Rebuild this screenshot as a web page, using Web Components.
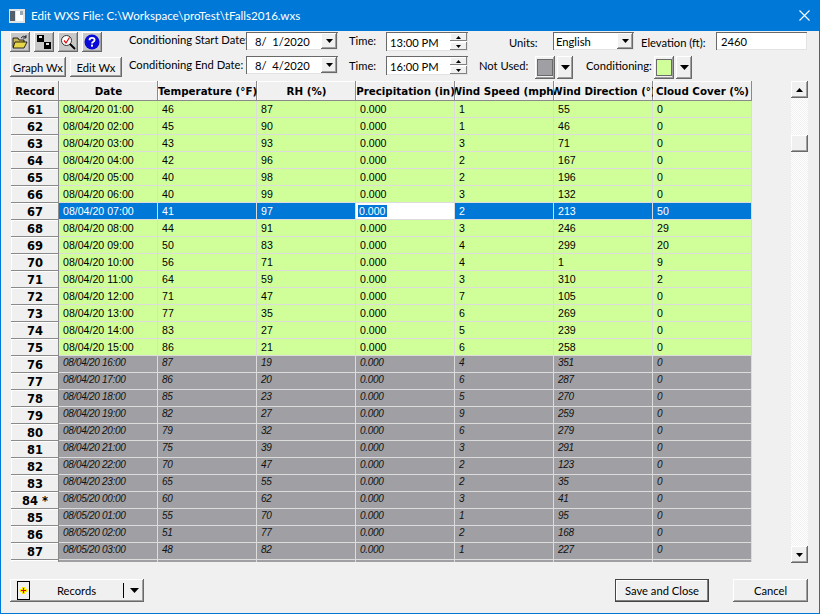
<!DOCTYPE html>
<html>
<head>
<meta charset="utf-8">
<title>Edit WXS File</title>
<style>
    html, body { margin: 0; padding: 0; background: #f0f0f0; }
</style>
</head>
<body>
<wxs-dialog heading="Edit WXS File: C:\Workspace\proTest\tFalls2016.wxs">
    <wxs-toolbar></wxs-toolbar>
    <wxs-table></wxs-table>
    <wxs-footer></wxs-footer>
</wxs-dialog>

<script>
/* Edit WXS dialog, drawn as old Win32 controls. */

const UI_FONT = 'Lato, Roboto, sans-serif';
const RAISED = 'inset -1px -1px #696969, inset 1px 1px #fff, inset -2px -2px #a0a0a0';
const SUNKEN = 'inset 1px 1px #696969, inset -1px -1px #e3e3e3';

const ARROW_DOWN = '<svg width="7" height="4" viewBox="0 0 7 4"><path d="M0,0 H7 L3.5,4 z" fill="#000"/></svg>';
const ARROW_UP = '<svg width="7" height="4" viewBox="0 0 7 4"><path d="M0,4 H7 L3.5,0 z" fill="#000"/></svg>';
const ARROW_WIDE = '<svg width="9" height="5" viewBox="0 0 9 5"><path d="M0,0 H9 L4.5,5 z" fill="#000"/></svg>';

const ROWS = [
    [61, '08/04/20 01:00', 46, 87, 1, 55, 0],
    [62, '08/04/20 02:00', 45, 90, 1, 46, 0],
    [63, '08/04/20 03:00', 43, 93, 3, 71, 0],
    [64, '08/04/20 04:00', 42, 96, 2, 167, 0],
    [65, '08/04/20 05:00', 40, 98, 2, 196, 0],
    [66, '08/04/20 06:00', 40, 99, 3, 132, 0],
    [67, '08/04/20 07:00', 41, 97, 2, 213, 50],
    [68, '08/04/20 08:00', 44, 91, 3, 246, 29],
    [69, '08/04/20 09:00', 50, 83, 4, 299, 20],
    [70, '08/04/20 10:00', 56, 71, 4, 1, 9],
    [71, '08/04/20 11:00', 64, 59, 3, 310, 2],
    [72, '08/04/20 12:00', 71, 47, 7, 105, 0],
    [73, '08/04/20 13:00', 77, 35, 6, 269, 0],
    [74, '08/04/20 14:00', 83, 27, 5, 239, 0],
    [75, '08/04/20 15:00', 86, 21, 6, 258, 0],
    [76, '08/04/20 16:00', 87, 19, 4, 351, 0],
    [77, '08/04/20 17:00', 86, 20, 6, 287, 0],
    [78, '08/04/20 18:00', 85, 23, 5, 270, 0],
    [79, '08/04/20 19:00', 82, 27, 9, 259, 0],
    [80, '08/04/20 20:00', 79, 32, 6, 279, 0],
    [81, '08/04/20 21:00', 75, 39, 3, 291, 0],
    [82, '08/04/20 22:00', 70, 47, 2, 123, 0],
    [83, '08/04/20 23:00', 65, 55, 2, 35, 0],
    ['84 *', '08/05/20 00:00', 60, 62, 3, 41, 0],
    [85, '08/05/20 01:00', 55, 70, 1, 95, 0],
    [86, '08/05/20 02:00', 51, 77, 2, 168, 0],
    [87, '08/05/20 03:00', 48, 82, 1, 227, 0],
    [88, '', '', '', '', '', ''],
];

const HEADERS = ['Date', 'Temperature (°F)', 'RH (%)', 'Precipitation (in)', 'Wind Speed (mph)', 'Wind Direction (°)', 'Cloud Cover (%)'];

const define = (name, render) => {
    customElements.define(name, class extends HTMLElement {
        constructor() {
            super();
            this.attachShadow({ mode: 'open' });
        }
        connectedCallback() {
            this.shadowRoot.innerHTML = render(this);
        }
    });
};

define('wxs-dialog', (el) => `
    <style>
        :host {
            display: flex;
            flex-direction: column;
            box-sizing: border-box;
            width: 820px;
            height: 614px;
            background: #f0f0f0;
            border: 1px solid #0078d7;
            border-top: 0;
            overflow: hidden;
        }
        .bar {
            display: flex;
            align-items: center;
            flex: none;
            height: 31px;
            margin: 0 -1px;
            padding-left: 9px;
            background: #0078d7;
            color: #fff;
            font: 11.6px ${UI_FONT};
        }
        .bar span { flex: 1; margin-left: 6px; }
        .close { margin-right: 10px; }
        svg { display: block; }
    </style>
    <div class="bar">
        <svg width="16" height="14" viewBox="0 0 16 14">
            <rect x="0" y="0" width="16" height="14" fill="#dfe3e6"/>
            <rect x="1" y="2" width="5" height="10" fill="#54606c"/>
            <rect x="7" y="2" width="7" height="10" fill="#fff"/>
            <rect x="11" y="2" width="3" height="4" fill="#9aa6b2"/>
        </svg>
        <span>${el.getAttribute('heading')}</span>
        <svg class="close" width="11" height="11" viewBox="0 0 11 11">
            <path d="M0.5,0.5 L10.5,10.5 M10.5,0.5 L0.5,10.5" stroke="#fff" stroke-width="1.1" fill="none"/>
        </svg>
    </div>
    <slot></slot>
`);

define('wxs-button', (el) => `
    <style>
        :host {
            display: flex;
            align-items: center;
            justify-content: center;
            box-sizing: border-box;
            flex: none;
            width: ${el.getAttribute('w')}px;
            height: ${el.getAttribute('h') || 19}px;
            background: ${el.hasAttribute('icon') ? '#c8c8c8' : '#f0f0f0'};
            box-shadow: ${el.hasAttribute('default') ? 'inset 0 0 0 1px #444, inset -2px -2px #808080, inset 2px 2px #fff' : RAISED};
            font: 11.2px ${UI_FONT};
            color: #000;
        }
    </style>
    <slot></slot>
`);

define('wxs-label', (el) => `
    <style>
        :host {
            display: block;
            flex: none;
            box-sizing: border-box;
            width: ${el.getAttribute('w')}px;
            margin-top: ${el.getAttribute('dy') || 0}px;
            font: 11.2px/16px ${UI_FONT};
            color: #000;
            white-space: nowrap;
        }
    </style>
    <slot></slot>
`);

define('wxs-combo', (el) => `
    <style>
        :host {
            display: flex;
            flex: none;
            box-sizing: border-box;
            width: ${el.getAttribute('w')}px;
            height: ${el.getAttribute('h') || 18}px;
            background: #fff;
            box-shadow: ${SUNKEN};
            font: 11.2px ${UI_FONT};
            color: #000;
        }
        .val { flex: 1; padding: 1px 0 0 ${el.getAttribute('pad') || 9}px; white-space: pre; line-height: 17px; }
        .btn {
            display: flex;
            align-items: center;
            justify-content: center;
            width: 16px;
            margin: 1px 1px 1px 0;
            background: #f0f0f0;
            box-shadow: ${RAISED};
        }
    </style>
    <div class="val"><slot></slot></div>
    ${el.hasAttribute('plain') ? '' : `<div class="btn">${ARROW_DOWN}</div>`}
`);

define('wxs-spin', (el) => `
    <style>
        :host {
            display: flex;
            flex: none;
            box-sizing: border-box;
            width: ${el.getAttribute('w')}px;
            height: 19px;
            background: #fff;
            box-shadow: ${SUNKEN};
            font: 11.2px ${UI_FONT};
            color: #000;
        }
        .val { flex: 1; padding: 2px 0 0 4px; line-height: 17px; }
        .btns { display: flex; flex-direction: column; gap: 1px; width: 17px; margin: 1px; }
        .btns div {
            flex: 1;
            display: flex;
            align-items: center;
            justify-content: center;
            background: #f0f0f0;
            box-shadow: inset -1px -1px #808080, inset 1px 1px #fff;
        }
        svg { width: 5px; height: 3px; }
    </style>
    <div class="val"><slot></slot></div>
    <div class="btns"><div>${ARROW_UP}</div><div>${ARROW_DOWN}</div></div>
`);

define('wxs-swatch', (el) => `
    <style>
        :host {
            display: flex;
            gap: 2px;
            flex: none;
            width: 38px;
            height: 23px;
        }
        .frame, .arrow {
            box-sizing: border-box;
            display: flex;
            align-items: center;
            justify-content: center;
            height: 23px;
            background: #f0f0f0;
            box-shadow: ${RAISED};
        }
        .frame { width: 20px; }
        .arrow { width: 16px; }
        .chip {
            width: 14px;
            height: 15px;
            background: ${el.getAttribute('color')};
            box-shadow: 0 0 0 1px #696969;
        }
    </style>
    <div class="frame"><div class="chip"></div></div>
    <div class="arrow">${ARROW_WIDE}</div>
`);

define('wxs-toolbar', () => `
    <style>
        :host { display: block; flex: none; height: 50px; }
        .row { display: flex; position: relative; }
        .r1 { padding: 1px 0 0 9px; height: 24px; }
        .r2 { padding: 0 0 0 9px; height: 25px; }
        .icons { display: flex; gap: 4px; width: 119px; flex: none; }
        .r2 .icons { padding-top: 1px; }
        svg { display: block; }
    </style>
    <div class="row r1">
        <div class="icons">
            <wxs-button icon w="20" h="20">
                <svg width="16" height="14" viewBox="0 0 16 14">
                    <path d="M1,3 H6 L7,5 H12 V12 H1 z" fill="#c9b458" stroke="#000" stroke-width="0.8"/>
                    <path d="M3,7 H15 L12,13 H1 z" fill="#e8d64a" stroke="#000" stroke-width="0.8"/>
                    <path d="M9,3 Q11,0 14,2 M14,0 V3 H11" fill="none" stroke="#000" stroke-width="0.8"/>
                </svg>
            </wxs-button>
            <wxs-button icon w="20" h="20">
                <svg width="14" height="14" viewBox="0 0 14 14">
                    <rect x="0" y="0" width="7" height="7" fill="#000"/>
                    <rect x="7" y="7" width="7" height="7" fill="#000"/>
                    <rect x="2" y="1" width="3" height="2" fill="#ddd"/>
                    <rect x="9" y="8" width="3" height="2" fill="#ddd"/>
                </svg>
            </wxs-button>
            <wxs-button icon w="20" h="20">
                <svg width="16" height="16" viewBox="0 0 16 16">
                    <circle cx="6.5" cy="6.5" r="5" fill="#fff" stroke="#333" stroke-width="1"/>
                    <path d="M4,6.5 L6,9 L9.5,3.5" fill="none" stroke="#e01010" stroke-width="1.3"/>
                    <path d="M10,10 L15,15" stroke="#000" stroke-width="2"/>
                </svg>
            </wxs-button>
            <wxs-button icon w="20" h="20">
                <svg width="16" height="16" viewBox="0 0 16 16">
                    <circle cx="8" cy="8" r="7.5" fill="#0a0ad8"/>
                    <path d="M5.5,6.2 Q5.5,3.8 8,3.8 Q10.6,3.8 10.6,6 Q10.6,7.2 9,8 Q8,8.6 8,9.6" fill="none" stroke="#fff" stroke-width="1.8"/>
                    <rect x="7" y="10.6" width="2" height="2" fill="#fff"/>
                </svg>
            </wxs-button>
        </div>
        <wxs-label w="117">Conditioning Start Date:</wxs-label>
        <wxs-combo w="92">8/  1/2020</wxs-combo>
        <wxs-label w="37" style="margin-left:11px" dy="1">Time:</wxs-label>
        <wxs-spin w="82">13:00 PM</wxs-spin>
        <wxs-label w="44" style="margin-left:41px" dy="3">Units:</wxs-label>
        <wxs-combo w="81" pad="3">English</wxs-combo>
        <wxs-label w="75" style="margin-left:7px" dy="3">Elevation (ft):</wxs-label>
        <wxs-combo plain w="91" pad="5">2460</wxs-combo>
    </div>
    <div class="row r2">
        <div class="icons">
            <wxs-button w="56" h="20">Graph Wx</wxs-button>
            <wxs-button w="52" h="20">Edit Wx</wxs-button>
        </div>
        <wxs-label w="117" dy="1">Conditioning End Date:</wxs-label>
        <wxs-combo w="92">8/  4/2020</wxs-combo>
        <wxs-label w="37" style="margin-left:11px" dy="2">Time:</wxs-label>
        <wxs-spin w="82">16:00 PM</wxs-spin>
        <wxs-label w="56" style="margin-left:11px" dy="2">Not Used:</wxs-label>
        <wxs-swatch color="#a0a0a4"></wxs-swatch>
        <wxs-label w="68" style="margin-left:13px" dy="2">Conditioning:</wxs-label>
        <wxs-swatch color="#d0ff99"></wxs-swatch>
    </div>
`);

const cellRow = (row) => {
    const [rec, date, temp, rh, speed, dir, cloud] = row;
    const n = parseInt(rec, 10);
    const kind = n === 67 ? 'sel' : n >= 76 ? 'off' : 'on';
    const precip = n === 67
        ? '<div class="c edit"><span>0.000</span></div>'
        : `<div class="c">${date ? '0.000' : ''}</div>`;
    return `<div class="rec">${date ? rec : ''}</div><div class="line ${kind}">
        <div class="c">${date}</div><div class="c">${temp}</div><div class="c">${rh}</div>
        ${precip}<div class="c">${speed}</div><div class="c">${dir}</div><div class="c">${cloud}</div>
    </div>`;
};

define('wxs-table', () => `
    <style>
        :host {
            display: flex;
            flex: none;
            height: 483px;
            margin-left: 10px;
            margin-right: 11px;
            justify-content: space-between;
        }
        .sheet {
            display: grid;
            grid-template-columns: 48px 1fr;
            grid-auto-rows: 17px;
            width: 742px;
            height: 481px;
            overflow: hidden;
            align-content: start;
            grid-template-rows: 20px;
        }
        .rec, .h {
            box-sizing: border-box;
            display: flex;
            align-items: center;
            justify-content: center;
            background: #f0f0f0;
            box-shadow: inset -1px -1px #8a8a8a, inset 1px 1px #fff;
            font: bold 10.3px "DejaVu Sans", sans-serif;
            color: #000;
            white-space: nowrap;
            overflow: hidden;
        }
        .rec { font-size: 11.5px; }
        .corner { font-size: 10px; }
        .heads, .line { display: grid; grid-template-columns: repeat(7, 99px); }
        .c {
            box-sizing: border-box;
            height: 17px;
            padding: 1px 0 0 4px;
            border-right: 1px solid #dcdcdc;
            border-bottom: 1px solid #dcdcdc;
            font: 10.6px/14px "Liberation Sans", sans-serif;
            white-space: nowrap;
            overflow: hidden;
        }
        .on .c { background: #d0ff99; color: #000; }
        .off .c { background: #a0a0a4; color: #111; font: italic 10px/12px "Liberation Sans", sans-serif; letter-spacing: -0.3px; }
        .sel .c { background: #0078d7; color: #fff; }
        .sel .c.edit { background: #fff; padding: 1px 0 0 2px; }
        .edit span { background: #0078d7; color: #fff; padding: 0 1px; }
        wxs-scroll { flex: none; }
    </style>
    <div class="sheet">
        <div class="h corner">Record</div>
        <div class="heads">${HEADERS.map((h) => `<div class="h">${h}</div>`).join('')}</div>
        ${ROWS.map(cellRow).join('')}
    </div>
    <wxs-scroll></wxs-scroll>
`);

define('wxs-scroll', () => `
    <style>
        :host {
            display: flex;
            flex-direction: column;
            box-sizing: border-box;
            width: 17px;
            height: 482px;
            background: repeating-conic-gradient(#fff 0 25%, #f0f0f0 0 50%) 0 0 / 2px 2px;
        }
        .b {
            flex: none;
            display: flex;
            align-items: center;
            justify-content: center;
            height: 17px;
            background: #f0f0f0;
            box-shadow: ${RAISED};
        }
        .thumb { margin-top: 37px; }
        .down { margin-top: auto; }
    </style>
    <div class="b">${ARROW_UP}</div>
    <div class="b thumb"></div>
    <div class="b down">${ARROW_DOWN}</div>
`);

define('wxs-records', () => `
    <style>
        :host {
            display: flex;
            align-items: center;
            box-sizing: border-box;
            flex: none;
            width: 134px;
            height: 23px;
            background: #f0f0f0;
            box-shadow: ${RAISED};
            font: 11.2px ${UI_FONT};
            color: #000;
        }
        .plus {
            display: flex;
            align-items: center;
            justify-content: center;
            box-sizing: border-box;
            width: 13px;
            height: 19px;
            margin-left: 7px;
            border: 1px solid #000;
        }
        .txt { width: 93px; text-align: center; }
        .sep { width: 1px; height: 15px; background: #000; }
        .arrow { flex: 1; display: flex; justify-content: center; }
    </style>
    <div class="plus">
        <svg width="7" height="7" viewBox="0 0 7 7">
            <path d="M0,3.5 H7 M3.5,0 V7" stroke="#ffe600" stroke-width="3"/>
            <path d="M1,3.5 H6 M3.5,1 V6" stroke="#e00000" stroke-width="1"/>
        </svg>
    </div>
    <div class="txt"><slot></slot></div>
    <div class="sep"></div>
    <div class="arrow">${ARROW_WIDE}</div>
`);

define('wxs-footer', () => `
    <style>
        :host {
            display: flex;
            align-items: flex-start;
            flex: none;
            padding: 15px 11px 0 9px;
        }
        .gap { flex: 1; }
        wxs-button + wxs-button { margin-left: 24px; }
    </style>
    <wxs-records>Records</wxs-records>
    <div class="gap"></div>
    <wxs-button default w="94" h="23">Save and Close</wxs-button>
    <wxs-button w="75" h="23">Cancel</wxs-button>
`);
</script>
</body>
</html>
